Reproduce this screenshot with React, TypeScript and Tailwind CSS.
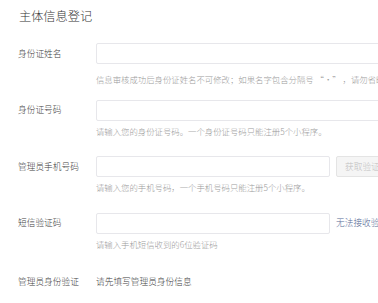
const font = { fontFamily: '"Noto Sans CJK SC", "Noto Sans", sans-serif' };

type RowProps = {
  label: string;
  hint: string;
  side?: "button" | "link";
  first?: boolean;
};

const FormRow = ({ label, hint, side, first }: RowProps) => {
  return (
    <div className="flex">
      <div className="w-[78px] shrink-0 h-[21px] flex items-center text-[8.7px] text-[#3e3e3e]">
        {label}
      </div>
      <div className="flex flex-col">
        <div className="flex items-center">
          <div
            className={
              side
                ? "w-[234px] h-[21px] border border-[#e7e7eb] rounded-[2px] bg-white"
                : "w-[320px] h-[21px] border border-[#e7e7eb] rounded-[2px] bg-white"
            }
          />
          {side === "button" && (
            <div className="ml-[6px] w-[60px] h-[21px] border border-[#e4e4e4] rounded-[2px] bg-[#f5f5f5] flex items-center pl-[8px] text-[8.7px] text-[#c0c0c0] whitespace-nowrap">
              获取验证码
            </div>
          )}
          {side === "link" && (
            <span className="ml-[6px] text-[8.7px] text-[#576b95] whitespace-nowrap">
              无法接收验证码？
            </span>
          )}
        </div>
        <div
          className={
            first
              ? "mt-[9px] mb-[-5px] leading-[12px] text-[8.4px] text-[#9a9a9a] whitespace-nowrap"
              : "mt-[4px] leading-[12px] text-[8.4px] text-[#9a9a9a] whitespace-nowrap"
          }
        >
          {hint}
        </div>
      </div>
    </div>
  );
};

const App = () => {
  return (
    <div
      className="w-[378px] h-[303px] overflow-hidden bg-white pl-[18px] pt-[9px] font-light"
      style={font}
    >
      <div className="pl-[1px] text-[12.2px] leading-[14px] text-[#353535]">
        主体信息登记
      </div>
      <div className="mt-[20px] flex flex-col gap-[19.5px]">
        <FormRow
          first
          label="身份证姓名"
          hint="信息审核成功后身份证姓名不可修改；如果名字包含分隔号 “·” ，请勿省略。"
        />
        <FormRow
          label="身份证号码"
          hint="请输入您的身份证号码。一个身份证号码只能注册5个小程序。"
        />
        <FormRow
          label="管理员手机号码"
          hint="请输入您的手机号码，一个手机号码只能注册5个小程序。"
          side="button"
        />
        <FormRow
          label="短信验证码"
          hint="请输入手机短信收到的6位验证码"
          side="link"
        />
        <div className="flex items-center h-[21px] mt-[2px] text-[8.7px] text-[#3e3e3e]">
          <div className="w-[78px] shrink-0">管理员身份验证</div>
          <div>请先填写管理员身份信息</div>
        </div>
      </div>
    </div>
  );
};

export default App;
